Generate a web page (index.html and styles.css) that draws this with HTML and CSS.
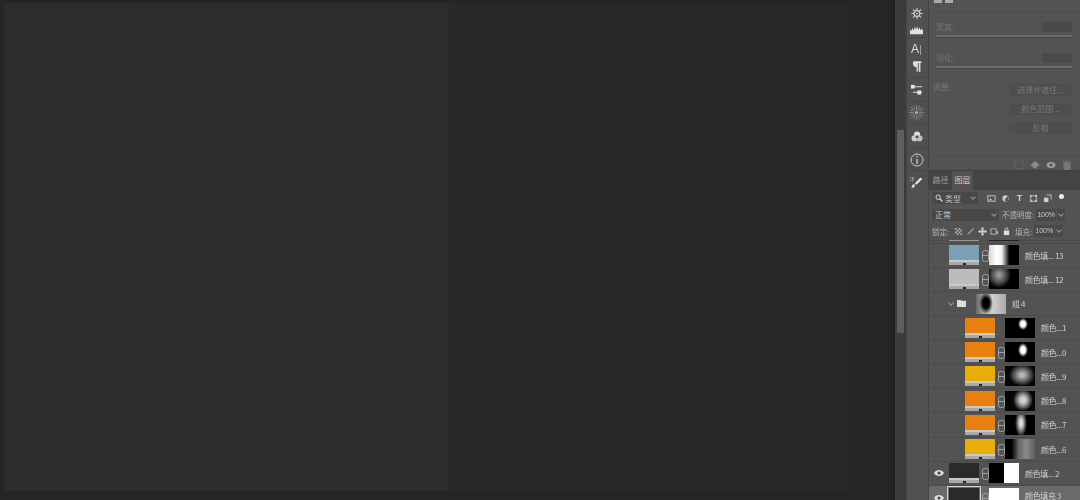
FILE: index.html
```html
<!DOCTYPE html>
<html lang="zh">
<head>
<meta charset="utf-8">
<title>图层</title>
<link rel="stylesheet" href="styles.css">
</head>
<body>
<main class="app">
  <section class="canvas">
    <div class="doc doc-left"></div>
    <div class="doc doc-right"></div>
  </section>
  <div class="scrollbar"><div class="thumb"></div></div>
  <nav class="strip">
    <div class="group g1">
      <svg class="ic" viewBox="0 0 14 14"><circle cx="7" cy="7" r="3.4" fill="none" stroke="#d5d5d5" stroke-width="1.300"/><circle cx="7" cy="7" r="1" fill="#d5d5d5"/><path d="M7 .5v3M7 10.500v3M.5 7h3M10.500 7h3M2.200 2.200l2.200 2.200M9.600 9.600l2.200 2.200M2.200 11.800l2.200-2.200M9.600 4.400l2.200-2.200" stroke="#ccc" stroke-width="1.300"/></svg>
      <svg class="ic wide" viewBox="0 0 14 14"><path d="M0 12V7l1.500 1.500L2.500 5l1.500 3 1.200-4 1.500 3.500L7.500 3 9 7.500 10.200 4.500 11.500 8l1-2 1.500 2v4z" fill="#e2e2e2"/></svg>
    </div>
    <div class="group g2">
      <div class="ic-text">A<span class="bar">|</span></div>
      <svg class="ic" viewBox="0 0 14 14"><path d="M3.500 1h8.500v2h-1v10H9V3H8v10H6.500V8C1.500 8 1.500 1 3.500 1z" fill="#ddd"/></svg>
    </div>
    <div class="group g3">
      <svg class="ic wide" viewBox="0 0 14 14"><path d="M1 4h12M3 10h10" stroke="#ddd" stroke-width="1.200"/><rect x="1" y="2" width="4" height="4" fill="#e5e5e5"/><rect x="8" y="8" width="4" height="4.500" fill="#e5e5e5"/></svg>
    </div>
    <div class="group g4">
      <svg class="ic dim" viewBox="0 0 14 14"><circle cx="7" cy="7" r="1.500" fill="#b0b0b0"/><path d="M7 0v4.500M7 9.500V14M0 7h4.500M9.500 7H14M2 2l3.300 3.300M8.700 8.700L12 12M2 12l3.300-3.300M8.700 5.300L12 2M4.300 .7l1.500 3.500M9.700 13.300l-1.500-3.500M.7 9.700l3.500-1.500M13.300 4.300L9.800 5.800M9.700 .7L8.200 4.200M4.300 13.300l1.500-3.500M.7 4.300l3.500 1.500M13.300 9.700L9.800 8.200" stroke="#8a8a8a" stroke-width=".8"/></svg>
    </div>
    <div class="group g5">
      <svg class="ic" viewBox="0 0 14 14"><circle cx="7" cy="4.800" r="3.600" fill="#ddd"/><circle cx="4.200" cy="9" r="3.600" fill="#ccc"/><circle cx="9.800" cy="9" r="3.600" fill="#c0c0c0"/><circle cx="7" cy="7.500" r="1.700" fill="#4a4a4a"/></svg>
    </div>
    <div class="group g6">
      <svg class="ic big" viewBox="0 0 14 14"><circle cx="7" cy="7" r="6" fill="none" stroke="#ccc" stroke-width="1"/><path d="M7 3v1.400M7 6v5" stroke="#ccc" stroke-width="1.300"/></svg>
    </div>
    <div class="group g7">
      <svg class="ic wide" viewBox="0 0 14 14"><path d="M0 2h1.500M3 2h1.500M0 4.500h1.500M3 1v5" stroke="#aaa" stroke-width="1"/><path d="M1.500 13l1-3 1.500-1.500 1.500 1.500-1 2zM5 8l6-6 2.500 1-6.500 6.500z" fill="#e2e2e2"/></svg>
    </div>
  </nav>
  <aside class="panels">
    <section class="props">
      <div class="prop-top"><span class="mini"></span><span class="mini"></span></div>
      <div class="field">
        <div class="field-head"><span class="lbl">宽度:</span><span class="valbox"></span></div>
        <div class="track"></div>
      </div>
      <div class="field">
        <div class="field-head"><span class="lbl">羽化:</span><span class="valbox"></span></div>
        <div class="track"></div>
      </div>
      <div class="adjust">
        <span class="lbl adj-lbl">调整:</span>
        <div class="btns">
          <span class="btn">选择并遮住...</span>
          <span class="btn">颜色范围...</span>
          <span class="btn">反相</span>
        </div>
      </div>
      <div class="prop-foot">
        <svg viewBox="0 0 10 10"><rect x="1" y="1" width="8" height="8" fill="none" stroke="#6c6c6c" stroke-dasharray="1.500 1"/></svg>
        <svg viewBox="0 0 10 10"><path d="M5 1l4.500 4L5 9 .5 5z" fill="#8a8a8a"/></svg>
        <svg viewBox="0 0 10 10"><ellipse cx="5" cy="5" rx="4.500" ry="3" fill="#999"/><circle cx="5" cy="5" r="1.200" fill="#444"/></svg>
        <svg viewBox="0 0 10 10"><path d="M2 3h6v6.500H2zM1 2h8M4 1h2" fill="#777" stroke="#777"/></svg>
      </div>
    </section>
    <section class="layers">
      <div class="tabs"><span class="tab">路径</span><span class="tab on">图层</span></div>
      <div class="bar-row search-row">
        <span class="select s-kind"><svg class="mag" viewBox="0 0 8 8"><circle cx="3.200" cy="3.200" r="2.200" fill="none" stroke="#ddd"/><path d="M5 5l2.500 2.500" stroke="#ddd" stroke-width="1.200"/></svg>类型<i class="caret"></i></span>
        <span class="filters">
          <svg viewBox="0 0 10 10"><rect x="1" y="2" width="8" height="6" fill="none" stroke="#ccc"/><path d="M2 7l2-2 2 2z" fill="#ccc"/></svg>
          <svg viewBox="0 0 10 10"><circle cx="5" cy="5" r="3.500" fill="#ccc"/><path d="M5 5l3-3v6H4z" fill="#555"/></svg>
          <span class="t-ic">T</span>
          <svg viewBox="0 0 10 10"><path d="M2 2h6v6H2z" fill="none" stroke="#ccc"/><path d="M1 1h2v2H1zM7 1h2v2H7zM1 7h2v2H1zM7 7h2v2H7z" fill="#ccc"/></svg>
          <svg viewBox="0 0 10 10"><path d="M1 4h5v5H1z" fill="#ccc"/><path d="M4 1h5v5" fill="none" stroke="#ccc"/></svg>
        </span>
        <span class="dot"></span>
      </div>
      <div class="bar-row mode-row">
        <span class="select s-mode">正常<i class="caret"></i></span>
        <span class="cap">不透明度:</span><span class="num">100%</span><span class="drop"><i class="caret"></i></span>
      </div>
      <div class="bar-row lock-row">
        <span class="cap">锁定:</span>
        <span class="locks">
          <svg viewBox="0 0 10 10"><path d="M1 1h2v2H1zM5 1h2v2H5zM3 3h2v2H3zM7 3h2v2H7zM1 5h2v2H1zM5 5h2v2H5zM3 7h2v2H3zM7 7h2v2H7z" fill="#aaa"/></svg>
          <svg viewBox="0 0 10 10"><path d="M1 9l2-3 5-5 1 1-5 5z" fill="#aaa"/></svg>
          <svg viewBox="0 0 10 10"><path d="M5 0l2 2H6v2h2V3l2 2-2 2V6H6v2h1l-2 2-2-2h1V6H2v1L0 5l2-2v1h2V2H3z" fill="#ccc"/></svg>
          <svg viewBox="0 0 10 10"><path d="M1 2h6v6H1z" fill="none" stroke="#bbb"/><path d="M6 5l3 3V5z" fill="#bbb"/></svg>
          <svg viewBox="0 0 10 10"><rect x="2" y="4" width="6" height="5" fill="#ddd"/><path d="M3.500 4V2.500a1.500 1.500 0 0 1 3 0V4" fill="none" stroke="#ddd"/></svg>
        </span>
        <span class="cap fill-cap">填充:</span><span class="num">100%</span><span class="drop"><i class="caret"></i></span>
      </div>
      <div class="list">
        <div class="row row-cut">
          <span class="eye-cell"></span>
          <span class="cut-a"></span><span class="cut-b"></span>
        </div>
        <div class="row">
          <span class="eye-cell"><i class="box"></i></span>
          <span class="swatch c-blue"></span><span class="chain"></span>
          <span class="mask m13"></span><span class="name">颜色填... 13</span>
        </div>
        <div class="row">
          <span class="eye-cell"><i class="box"></i></span>
          <span class="swatch c-grey"></span><span class="chain"></span>
          <span class="mask m12"></span><span class="name">颜色填... 12</span>
        </div>
        <div class="row">
          <span class="eye-cell"><i class="box"></i></span>
          <span class="arrow"></span>
          <svg class="folder" viewBox="0 0 12 10"><path d="M1 1h4l1 1h5v7H1z" fill="#ddd"/></svg>
          <span class="mask m-group"></span><span class="name">组 4</span>
        </div>
        <div class="row sub">
          <span class="eye-cell"><i class="box"></i></span>
          <span class="swatch c-orange"></span><span class="chain empty"></span>
          <span class="mask m1"></span><span class="name">颜色...1</span>
        </div>
        <div class="row sub">
          <span class="eye-cell"><i class="box"></i></span>
          <span class="swatch c-orange"></span><span class="chain"></span>
          <span class="mask m0"></span><span class="name">颜色...0</span>
        </div>
        <div class="row sub">
          <span class="eye-cell"><i class="box"></i></span>
          <span class="swatch c-yellow"></span><span class="chain"></span>
          <span class="mask m9"></span><span class="name">颜色...9</span>
        </div>
        <div class="row sub">
          <span class="eye-cell"><i class="box"></i></span>
          <span class="swatch c-orange"></span><span class="chain"></span>
          <span class="mask m8"></span><span class="name">颜色...8</span>
        </div>
        <div class="row sub">
          <span class="eye-cell"><i class="box"></i></span>
          <span class="swatch c-orange"></span><span class="chain"></span>
          <span class="mask m7"></span><span class="name">颜色...7</span>
        </div>
        <div class="row sub">
          <span class="eye-cell"><i class="box"></i></span>
          <span class="swatch c-yellow"></span><span class="chain"></span>
          <span class="mask m6"></span><span class="name">颜色...6</span>
        </div>
        <div class="row">
          <span class="eye-cell"><svg class="eye" viewBox="0 0 10 8"><path d="M0 4c2-4 8-4 10 0-2 4-8 4-10 0z" fill="#ddd"/><circle cx="5" cy="4" r="1.500" fill="#444"/></svg></span>
          <span class="swatch c-dark"></span><span class="chain"></span>
          <span class="mask m2"></span><span class="name">颜色填... 2</span>
        </div>
        <div class="row active">
          <span class="eye-cell"><svg class="eye" viewBox="0 0 10 8"><path d="M0 4c2-4 8-4 10 0-2 4-8 4-10 0z" fill="#ddd"/><circle cx="5" cy="4" r="1.500" fill="#444"/></svg></span>
          <span class="swatch c-dark sel"></span><span class="chain"></span>
          <span class="mask m3"></span><span class="name name-last">颜色填充 3</span>
        </div>
      </div>
    </section>
  </aside>
</main>
</body>
</html>
```
FILE: styles.css
```css
* { box-sizing: border-box; }
html, body { margin: 0; height: 500px; overflow: hidden; background: #262626; }
body { font-family: "Noto Sans CJK SC", "Liberation Sans", sans-serif; }
.app { display: flex; width: 1080px; height: 500px; overflow: hidden; }

.canvas { width: 895px; flex: none; display: flex; padding: 3px 44px 9px 4px; background: #252525; border-right: 2px solid #1f1f1f; }
.doc-left { width: 445px; background: #2c2c2c; }
.doc-right { width: 400px; background: #282828; }

.scrollbar { width: 11px; flex: none; padding: 130px 2px 0 2px; background: #3c3c3c; }
.thumb { height: 203px; background: #5e5e5e; }

.strip { width: 23px; flex: none; display: flex; flex-direction: column; padding: 4px 2px 0 0; background: #505050; border-left: 1px solid #444; border-right: 1px solid #444; filter: blur(.3px); }
.group { display: flex; flex-direction: column; align-items: center; border-bottom: 1px solid #474747; }
.g1 { height: 34px; padding-top: 3px; gap: 3px; }
.g2 { height: 40px; padding-top: 5px; gap: 4px; }
.g3 { height: 24px; padding-top: 5px; }
.g4 { height: 23px; padding-top: 3px; }
.g5 { height: 23px; padding-top: 5px; }
.g6 { height: 23px; padding-top: 5px; }
.g7 { height: 23px; padding-top: 5px; border-bottom: 0; }
.ic { width: 12px; height: 13px; display: block; }
.ic.wide { width: 13px; }
.ic.big { width: 14px; height: 14px; }
.ic.dim { width: 15px; height: 15px; }
.ic-text { height: 13px; font: 12px/13px "Liberation Sans", sans-serif; color: #ddd; }
.bar { color: #aaa; font-size: 11px; }

.panels { width: 151px; flex: none; display: flex; flex-direction: column; background: #535353; }
.props { height: 171px; flex: none; display: flex; flex-direction: column; position: relative; padding: 0 8px 0 7px; border-bottom: 1px solid #3f3f3f; filter: blur(.45px); }
.prop-top { height: 12px; display: flex; gap: 3px; padding-left: 5px; margin: 0 -8px 0 -7px; border-bottom: 1px solid #4c4c4c; }
.mini { width: 8px; height: 3px; background: #aaa; }
.field { height: 31px; padding-top: 10px; }
.field-head { display: flex; justify-content: space-between; align-items: center; height: 10px; margin-bottom: 3px; }
.lbl { font-size: 8px; line-height: 10px; color: #767676; }
.valbox { width: 30px; height: 10px; background: #4a4a4a; }
.track { height: 2px; background: #6c6c6c; box-shadow: 0 1px 0 #484848; }
.adjust { display: flex; justify-content: space-between; margin: 10px 0 0 -3px; }
.adj-lbl { margin-top: -2px; }
.btns { display: flex; flex-direction: column; gap: 7px; }
.btn { width: 63px; height: 12px; background: #4e4e4e; font-size: 8px; line-height: 12px; text-align: center; color: #7a7a7a; }
.prop-foot { position: absolute; left: 0; right: 0; bottom: 0; height: 14px; padding: 2px 8px 0 0; display: flex; justify-content: flex-end; align-items: center; gap: 6px; border-top: 1px solid #4c4c4c; }
.prop-foot svg { width: 10px; height: 10px; display: block; }

.layers { flex: 1; min-height: 0; display: flex; flex-direction: column; filter: blur(.3px); }
.tabs { height: 19px; flex: none; display: flex; background: #444; padding-left: 1px; }
.tab { width: 21px; font-size: 8px; line-height: 18px; text-align: center; color: #9a9a9a; }
.tab.on { background: #535353; color: #ccc; margin-left: 1px; }
.bar-row { display: flex; align-items: center; flex: none; height: 16.500px; padding-left: 3px; font-size: 7.500px; color: #b5b5b5; }
.select { display: flex; align-items: center; position: relative; height: 12px; background: #484848; color: #c4c4c4; padding-left: 3px; font-size: 8px; }
.s-kind { width: 46px; gap: 2px; }
.s-mode { width: 67px; }
.mag { width: 8px; height: 8px; }
.caret { position: absolute; right: 3px; top: 3px; width: 4px; height: 4px; border-right: 1px solid #999; border-bottom: 1px solid #999; transform: rotate(45deg); }
.filters { display: flex; gap: 5px; margin-left: 9px; align-items: center; }
.filters svg { width: 9px; height: 9px; display: block; }
.t-ic { width: 9px; font: bold 9px/9px "Liberation Sans", sans-serif; color: #ccc; text-align: center; }
.dot { width: 5px; height: 5px; border-radius: 50%; background: #eee; margin: -4px 0 0 7px; }
.cap { margin-left: 3px; white-space: nowrap; }
.num { width: 20px; height: 12px; margin-left: 2px; background: #484848; line-height: 12px; font-size: 7px; font-family: "Liberation Sans", sans-serif; color: #ccc; text-align: center; }
.drop { position: relative; width: 8px; height: 12px; margin-left: 1px; background: #484848; }
.drop .caret { right: 2px; }
.locks { display: flex; gap: 3px; margin-left: 5px; }
.locks svg { width: 9px; height: 9px; display: block; }
.lock-row .cap:first-child { margin-left: 0; }
.fill-cap { margin-left: 4px; }

.list { flex: 1; min-height: 0; overflow: hidden; display: flex; flex-direction: column; }
.row { height: 24.250px; flex: none; display: flex; align-items: center; position: relative; border-bottom: 1px solid #4b4b4b; }
.row-cut { height: 4px; border-top: 1px solid #4b4b4b; }
.eye-cell { width: 20px; height: 100%; flex: none; display: flex; align-items: center; justify-content: center; }
.box { width: 9px; height: 9px; border-left: 1px solid #5a5a5a; border-bottom: 1px solid #5a5a5a; opacity: .7; }
.eye { width: 10px; height: 8px; display: block; }
.sub { padding-left: 16px; }
.swatch { width: 30px; height: 20px; flex: none; position: relative; background: #777; border-bottom: 3px solid #a8a8a8; box-shadow: inset 0 -2px 0 #c9c9c9; }
.swatch::after { content: ""; position: absolute; left: 50%; bottom: -3px; width: 3px; height: 2px; margin-left: -1px; background: #222; }
.chain { width: 10px; height: 10px; flex: none; position: relative; }
.chain::before { content: ""; position: absolute; left: 2.500px; top: 0; width: 5px; height: 10px; border: 1px solid #bcbcbc; border-radius: 2.500px; background: linear-gradient(transparent 45%, #bcbcbc 45%, #bcbcbc 55%, transparent 55%); opacity: .75; }
.chain.empty::before { display: none; }
.mask { width: 30px; height: 20px; flex: none; background: #000; }
.name { margin-left: 6px; font-size: 8px; letter-spacing: -.35px; white-space: nowrap; color: #d2d2d2; }
.name-last { margin-top: -4px; }
.c-blue { background: #7aa0b5; }
.c-grey { background: #bcbcbc; }
.c-orange { background: #e8800e; }
.c-yellow { background: #e8ad0b; }
.c-dark { background: #2a2a2a; }
.sel { outline: 1px solid #d5d5d5; outline-offset: 1px; }
.active { background: #6a6a6a; }
.arrow { width: 4px; height: 4px; margin: 0 3px 2px 0; border-right: 1px solid #999; border-bottom: 1px solid #999; transform: rotate(45deg); }
.folder { width: 11px; height: 9px; margin-right: 9px; }
.cut-a { position: absolute; left: 20px; top: -1px; width: 30px; height: 1px; background: #999; }
.cut-b { position: absolute; left: 60px; top: -1px; width: 30px; height: 1px; background: #222; }

.m13 { background: linear-gradient(90deg, #d8d8d8 0, #fff 25%, #f2f2f2 42%, #000 68%); }
.m12 { background: radial-gradient(ellipse 12px 13px at 10px 6px, #a8a8a8, #4a4a4a 60%, #000 100%); }
.m-group { background: radial-gradient(ellipse 7px 11px at 10px 9px, #000 45%, rgba(0,0,0,0) 100%), linear-gradient(90deg, #666 0, #aaa 25%, #cfcfcf 55%, #aaa 100%); }
.m1 { background: radial-gradient(ellipse 5px 6px at 18px 6px, #fff 45%, #000 100%); }
.m0 { background: radial-gradient(ellipse 5px 7px at 18px 8px, #fff 45%, #000 100%); }
.m9 { background: radial-gradient(ellipse 13px 11px at 17px 9px, #b8b8b8 15%, #5c5c5c 60%, #060606 100%); }
.m8 { background: radial-gradient(ellipse 10px 11px at 18px 9px, #d0d0d0 25%, #6c6c6c 65%, #050505 100%); }
.m7 { background: radial-gradient(ellipse 6px 14px at 16px 8px, #d8d8d8 25%, #555 70%, #000 100%); }
.m6 { background: linear-gradient(90deg, #000 0 22%, #666 45%, #8a8a8a 70%, #5c5c5c 100%); }
.m2 { background: linear-gradient(90deg, #000 50%, #fff 50%); }
.m3 { background: #fff; }
```
